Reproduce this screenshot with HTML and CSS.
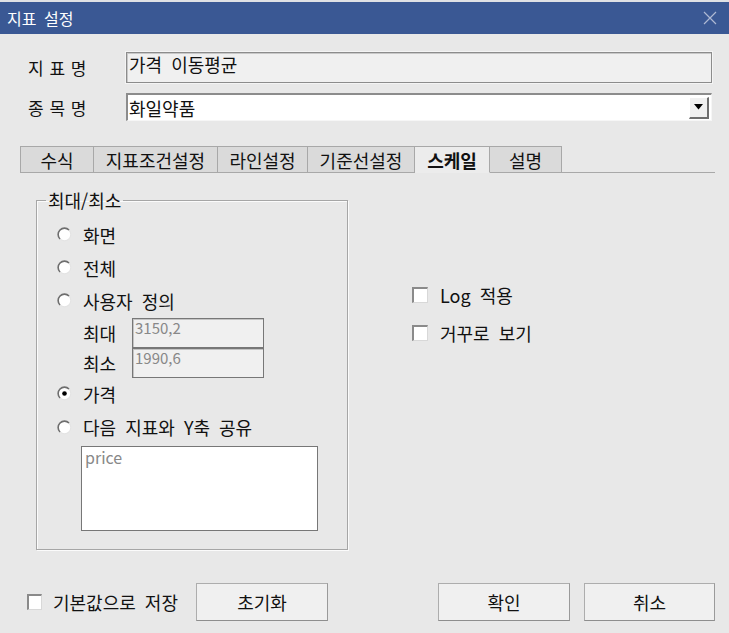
FILE: index.html
```html
<!DOCTYPE html>
<html lang="ko">
<head>
<meta charset="utf-8">
<title>지표 설정</title>
<link rel="stylesheet" href="styles.css">
</head>
<body>
<div class="strip"></div>
<div class="titlebar">
  <span class="title">지표 설정</span>
  <svg class="close" width="14" height="14" viewBox="0 0 14 14"><path d="M1 1 L13 13 M13 1 L1 13" stroke="#aeb9d3" stroke-width="1.2" fill="none"/></svg>
</div>
<div class="main">
  <div class="row row-name">
    <span class="lbl">지 표 명</span>
    <div class="field field-ro">가격 이동평균</div>
  </div>
  <div class="row row-item">
    <span class="lbl">종 목 명</span>
    <div class="combo">
      <span class="combo-text">화일약품</span>
      <span class="combo-btn"><svg width="9" height="6" viewBox="0 0 9 6"><path d="M0 0 H9 L4.5 5.5 Z" fill="#000"/></svg></span>
    </div>
  </div>
  <div class="tabs">
    <div class="tab t1">수식</div>
    <div class="tab t2">지표조건설정</div>
    <div class="tab t3">라인설정</div>
    <div class="tab t4">기준선설정</div>
    <div class="tab t5 active">스케일</div>
    <div class="tab t6">설명</div>
    <div class="tab-fill"></div>
  </div>
  <div class="panel">
    <fieldset class="group">
      <legend>최대/최소</legend>
      <div class="opt"><svg class="radio" width="15" height="15" viewBox="0 0 15 15"><circle cx="7.5" cy="7.5" r="6.3" fill="#fff" stroke="#e4e4e4" stroke-width="1.2"/><path d="M3 12 A6.3 6.3 0 0 1 12 3" stroke="#6e6e6e" stroke-width="1.6" fill="none"/></svg><span>화면</span></div>
      <div class="opt"><svg class="radio" width="15" height="15" viewBox="0 0 15 15"><circle cx="7.5" cy="7.5" r="6.3" fill="#fff" stroke="#e4e4e4" stroke-width="1.2"/><path d="M3 12 A6.3 6.3 0 0 1 12 3" stroke="#6e6e6e" stroke-width="1.6" fill="none"/></svg><span>전체</span></div>
      <div class="opt"><svg class="radio" width="15" height="15" viewBox="0 0 15 15"><circle cx="7.5" cy="7.5" r="6.3" fill="#fff" stroke="#e4e4e4" stroke-width="1.2"/><path d="M3 12 A6.3 6.3 0 0 1 12 3" stroke="#6e6e6e" stroke-width="1.6" fill="none"/></svg><span>사용자 정의</span></div>
      <div class="minmax">
        <div class="mm-row"><span class="mm-lbl">최대</span><div class="mm-field">3150,2</div></div>
        <div class="mm-row"><span class="mm-lbl">최소</span><div class="mm-field">1990,6</div></div>
      </div>
      <div class="opt opt-price"><svg class="radio" width="15" height="15" viewBox="0 0 15 15"><circle cx="7.5" cy="7.5" r="6.3" fill="#fff" stroke="#e4e4e4" stroke-width="1.2"/><path d="M3 12 A6.3 6.3 0 0 1 12 3" stroke="#6e6e6e" stroke-width="1.6" fill="none"/><circle cx="7.5" cy="7.5" r="2.3" fill="#000"/></svg><span>가격</span></div>
      <div class="opt opt-share"><svg class="radio" width="15" height="15" viewBox="0 0 15 15"><circle cx="7.5" cy="7.5" r="6.3" fill="#fff" stroke="#e4e4e4" stroke-width="1.2"/><path d="M3 12 A6.3 6.3 0 0 1 12 3" stroke="#6e6e6e" stroke-width="1.6" fill="none"/></svg><span>다음 지표와 Y축 공유</span></div>
      <div class="listbox">price</div>
    </fieldset>
    <div class="checks">
      <div class="chk-row"><span class="chk"></span><span>Log 적용</span></div>
      <div class="chk-row"><span class="chk"></span><span>거꾸로 보기</span></div>
    </div>
  </div>
  <div class="footer">
    <div class="save"><span class="chk chk-small"></span><span>기본값으로 저장</span></div>
    <button class="btn btn-reset">초기화</button>
    <button class="btn btn-ok">확인</button>
    <button class="btn btn-cancel">취소</button>
  </div>
</div>
</body>
</html>
```

FILE: styles.css
```css
* { box-sizing: border-box; }
html, body { margin: 0; padding: 0; }
body {
  width: 729px;
  height: 633px;
  overflow: hidden;
  background: #e8e8e8;
  font-family: "Noto Sans CJK KR", "Noto Sans", sans-serif;
  font-size: 18px;
  color: #111;
  word-spacing: 4px;
}
.strip { height: 2px; background: #dfe1e5; }
.titlebar {
  height: 32px;
  background: #3a5894;
  display: flex;
  align-items: center;
  justify-content: space-between;
  padding: 0 12px 0 7px;
  color: #fff;
}
.title { font-size: 16px; word-spacing: 3px; }
.close { display: block; }

.main { padding-top: 18px; }
.row { display: flex; align-items: center; }
.row-name { height: 31px; }
.row-item { height: 28px; margin-top: 10px; }
.lbl {
  width: 126px;
  padding-left: 28px;
  font-size: 17px;
  word-spacing: 1px;
}
.field {
  width: 586px;
  height: 100%;
  line-height: 20px;
  padding: 1px 2px;
}
.field-ro {
  background: #f0f0f0;
  border: 1px solid #8c8c8c;
  box-shadow: inset 1px 1px 0 #c8c8c8, 0 0 0 1px #f4f4f4;
}
.combo {
  width: 586px;
  height: 100%;
  background: #fff;
  border-top: 2px solid #8c8c8c;
  border-left: 2px solid #8c8c8c;
  border-right: 1px solid #f6f6f6;
  border-bottom: 1px solid #f6f6f6;
  display: flex;
  align-items: center;
  justify-content: space-between;
  padding: 0 2px 0 1px;
}
.combo-text { line-height: 22px; }
.combo-btn {
  width: 20px;
  height: 22px;
  background: #f0f0f0;
  border-top: 1px solid #fff;
  border-left: 1px solid #fff;
  border-right: 2px solid #6e6e6e;
  border-bottom: 2px solid #6e6e6e;
  display: flex;
  align-items: center;
  justify-content: center;
}
.combo-btn svg { display: block; }

.tabs {
  display: flex;
  margin-top: 25px;
  margin-left: 20px;
  width: 695px;
  height: 27px;
}
.tab {
  height: 27px;
  background: #dadada;
  border: 1px solid #a8a8a8;
  border-left: none;
  display: flex;
  align-items: center;
  justify-content: center;
  font-size: 18px;
  line-height: 20px;
}
.t1 { width: 74px; border-left: 1px solid #a8a8a8; }
.t2 { width: 124px; }
.t3 { width: 90px; }
.t4 { width: 107px; }
.t5 { width: 75px; }
.t6 { width: 72px; }
.tab.active {
  background: #ececec;
  border-bottom-color: #ececec;
  font-weight: bold;
}
.tab-fill { flex: 1; border-bottom: 1px solid #a8a8a8; }

.panel {
  display: flex;
  margin-top: 17px;
  padding-left: 36px;
}
.group {
  margin: 0;
  padding: 8px 0 18px 0;
  width: 312px;
  min-width: 0;
  border: 1px solid #a6a6a6;
  box-shadow: inset 1px 1px 0 #fbfbfb, 1px 1px 0 #fbfbfb;
}
.group legend {
  margin-left: 9px;
  padding: 0 2px;
  line-height: 20px;
  height: 20px;
  word-spacing: 0;
}
.opt {
  display: flex;
  align-items: center;
  height: 33px;
  padding-left: 20px;
}
.radio { display: block; margin-right: 11px; flex: none; }
.opt-price { height: 31px; }
.opt-share { height: 36px; }
.minmax { margin-top: 1px; padding-left: 46px; }
.mm-row { display: flex; align-items: center; height: 30px; }
.mm-lbl { width: 49px; }
.mm-field {
  width: 132px;
  height: 30px;
  background: #f0f0f0;
  border: 1px solid #777;
  box-shadow: inset 1px 1px 0 #c4c4c4;
  color: #888;
  font-size: 15px;
  line-height: 18px;
  padding: 0 2px;
}
.listbox {
  margin-top: 1px;
  margin-left: 44px;
  width: 237px;
  height: 85px;
  background: #fff;
  border: 1px solid #777;
  color: #888;
  font-size: 16px;
  line-height: 20px;
  padding: 0 3px;
}

.checks { margin-left: 64px; padding-top: 90px; }
.chk-row { display: flex; align-items: center; height: 30px; margin-bottom: 8px; }
.chk {
  display: block;
  width: 16px;
  height: 16px;
  background: #fff;
  border-top: 2px solid #8a8a8a;
  border-left: 2px solid #8a8a8a;
  border-right: 1px solid #d8d8d8;
  border-bottom: 1px solid #d8d8d8;
  margin-right: 12px;
  flex: none;
}

.footer {
  display: flex;
  align-items: center;
  margin-top: 33px;
  height: 38px;
  padding-left: 27px;
}
.save { display: flex; align-items: center; width: 169px; white-space: nowrap; }
.chk-small { width: 15px; height: 16px; margin-right: 11px; }
.btn {
  height: 38px;
  background: #f0f0f0;
  border: 1px solid #adadad;
  border-bottom-color: #8e8e8e;
  border-right-color: #9a9a9a;
  font-family: inherit;
  font-size: 18px;
  color: #111;
  padding: 0;
  margin: 0;
}
.btn-reset { width: 132px; }
.btn-ok { width: 132px; margin-left: 110px; }
.btn-cancel { width: 131px; margin-left: 14px; }
```
